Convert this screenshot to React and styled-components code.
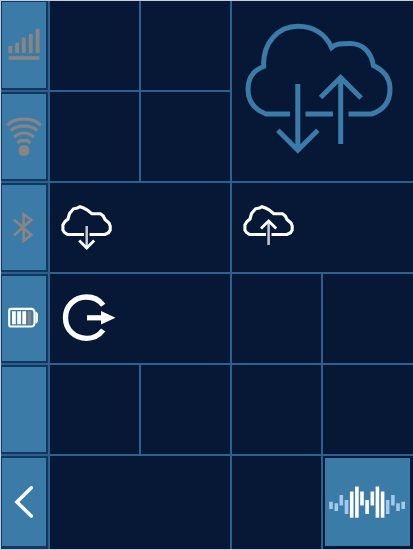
import React from 'react';
import styled, { createGlobalStyle } from 'styled-components';

const Global = createGlobalStyle`
  body { margin: 0; background: #c3cdd5; font-family: "Liberation Sans", Arial, sans-serif; }
`;

const Screen = styled.main`
  box-sizing: border-box;
  width: 413px;
  height: 550px;
  padding: 1px 0 1px 1px;
  background: #c3cdd5;
`;

const Board = styled.div`
  display: grid;
  grid-template-columns: 47px 89px 89px 89px 90px;
  grid-template-rows: repeat(5, 89px) 93px;
  gap: 2px;
  height: 548px;
  background: #2b618e;
`;

const Cell = styled.div`
  display: flex;
  align-items: flex-start;
  box-sizing: border-box;
  min-width: 0;
  min-height: 0;
  background: #071837;
  grid-column: ${(p) => p.$col} / span ${(p) => p.$w || 1};
  grid-row: ${(p) => p.$row} / span ${(p) => p.$h || 1};
`;

const SideCell = styled(Cell)`
  padding: ${(p) => (p.$row === 1 ? '1px 2px 2px 1px' : p.$row === 6 ? '2px 2px 3px 1px' : '2px 2px 2px 1px')};
  background: #11365f;
`;

const WaveCell = styled(Cell)`
  padding: 2px 3px 3px 2px;
`;

const Tile = styled.button`
  display: flex;
  align-items: flex-start;
  width: 100%;
  height: 100%;
  padding: 0;
  border: 0;
  background: #3a7ba8;
`;

const Icon = styled.svg`
  display: block;
  flex: none;
  margin: ${(p) => p.$top}px 0 0 ${(p) => p.$left}px;
  fill: none;
  stroke: ${(p) => p.$color || '#fff'};
`;

const Signal = () => (
  <Icon width="32" height="33" viewBox="8 28 32 33" $left={6} $top={26} $color="#8a8583">
    <path d="M10.3 46v7M17.1 42.7V53M23.7 37.5V53M30.8 34V53M37.6 29v24" strokeWidth="3.8" />
    <path d="M8.5 58h31" strokeWidth="3.6" />
  </Icon>
);

const Wifi = () => (
  <Icon width="36" height="41" viewBox="6 116 36 41" $left={4} $top={22} $color="#8a8583">
    <path d="M7.2 125.2L12.5 121.2L19 119.3H29L35.5 121.2L40.8 125.2M10.8 130.6L15 127.6L20 126.3H28L33 127.6L37.2 130.6M14 137L18 134.4L21 133.3H27L30 134.4L34 137M17.5 143L20.5 140.6H27.5L30.5 143" strokeWidth="3.1" />
    <circle cx="24" cy="150.5" r="5.6" fill="#8a8583" stroke="none" />
  </Icon>
);

const Bluetooth = () => (
  <Icon width="22" height="34" viewBox="12 211 22 34" $left={10} $top={26} $color="#8a8583">
    <path d="M14 219.5l17.3 15.5-7.7 5.8v-26.5l7.7 5.5L14 235.5" strokeWidth="2.6" />
  </Icon>
);

const Battery = () => (
  <Icon width="32" height="22" viewBox="7 307 32 22" $left={5} $top={31}>
    <path d="M11 308.9h20.5q2.3 0 3 3v11.6q-.7 3-3 3H11q-1.8 0-1.8-1.8v-14q0-1.8 1.8-1.8z" strokeWidth="2.1" />
    <path d="M35.5 311.8h.8q1.7 1 1.7 2.6v6.4q0 1.6-1.7 2.6h-.8z" fill="#fff" stroke="none" />
    <path d="M13.9 311.3v13M19.1 311.3v13M24.2 311.3v13" strokeWidth="3.8" />
    <path d="M29.4 311.3v13" stroke="#8a8583" strokeWidth="3.6" />
  </Icon>
);

const Back = () => (
  <Icon width="22" height="36" viewBox="13 484 22 36" $left={11} $top={26}>
    <path d="M31.3 487.8L16.9 502l14.4 14" strokeWidth="3.5" strokeLinecap="round" strokeLinejoin="miter" />
  </Icon>
);

const SyncCloud = () => (
  <Icon width="152" height="136" viewBox="243 20 152 136" $left={11} $top={19} $color="#3a7ba8">
    <path
      d="M290 114H266C254 109.5 248 101 248 89C248 77 254 70 263.7 66.5C262.5 43 278 26.2 298 26.2C314 26.2 326 34.5 331.5 47.5C336 43.7 341 43.5 350 43.5C363 43.5 371.5 52.5 373.3 65.5C384 70.5 390 78.5 390 89C390 101.5 384 110 371.5 114H348.5M333 114H305.5"
      strokeWidth="5"
    />
    <path d="M297.8 84v66M277.8 130.3l20 20 20-20M340.7 144V76M320.6 97.5l20-20 20.5 20.5" strokeWidth="5" />
  </Icon>
);

const smallCloud = 'M84 234.5H67.5L64.5 232.5L62.9 230V225L65 221.5L68 219L69.5 213.5L73.5 208.8L77.5 208L80 206.7L83.5 208L87 209.8L91.8 213.7H100.5L103.3 216L105 219.5L109 223L110.2 226V230L108.5 232.7L105 234.5H89.5';

const DownloadCloud = () => (
  <Icon width="52" height="48" viewBox="60 203 52 48" $left={10} $top={20}>
    <path d={smallCloud} strokeWidth="3.1" />
    <path d="M86.7 226v22" stroke="#c6cbd3" strokeWidth="2.5" />
    <path d="M79.2 240.5l7.5 7.5 7.5-7.5" strokeWidth="2.7" />
  </Icon>
);

const UploadCloud = () => (
  <Icon width="52" height="48" viewBox="242 203 52 48" $left={10} $top={20}>
    <path d={smallCloud} transform="translate(182)" strokeWidth="3.1" />
    <path d="M268.6 245v-23" stroke="#c6cbd3" strokeWidth="2.5" />
    <path d="M261 228.5l7.6-7.5 7.6 7.5" strokeWidth="2.7" />
  </Icon>
);

const Exit = () => (
  <Icon width="56" height="52" viewBox="61 292 56 52" $left={11} $top={18}>
    <path d="M103.2 305.2C99 299.5 93 297 86.5 297C74 297 65.5 306.5 65.5 317.7C65.5 329.5 74.5 338.4 86.5 338.4C93.5 338.4 99 335.5 103.2 330" strokeWidth="5.3" />
    <path d="M87 317.8h16" strokeWidth="5.2" />
    <path d="M101 311l14.5 6.8-14.5 6.8z" fill="#fff" stroke="none" />
  </Icon>
);

const bars = [
  [331, 501.7, 509], [336.3, 503.3, 511], [341.3, 495, 505.5], [346.5, 500, 514],
  [351.7, 491.5, 517.7], [356.9, 486.5, 517.7], [362, 491.5, 505.5], [367.1, 500, 514],
  [372.3, 491.5, 505.5], [377.4, 486.5, 517.7], [382.6, 491.5, 517.7], [387.7, 500, 514],
  [392.9, 495, 505.5], [398, 503.3, 511], [403.2, 501.7, 509],
];

const Waveform = () => (
  <Icon width="78" height="36" viewBox="328 484 78 36" $left={3} $top={26}>
    {bars.map(([x, top, bottom], i) => (
      <path key={x} d={`M${x} ${top}V${bottom}`} stroke={i > 3 && i < 11 ? '#fff' : '#a3c9eb'} strokeWidth="3.6" />
    ))}
  </Icon>
);

const sideItems = [
  ['Signal', Signal], ['Wi-Fi', Wifi], ['Bluetooth', Bluetooth],
  ['Battery', Battery], ['Blank', null], ['Back', Back],
];

const emptyCells = [
  [1, 2], [1, 3], [2, 2], [2, 3], [4, 4], [4, 5],
  [5, 2], [5, 3], [5, 4], [5, 5], [6, 2, 2], [6, 4],
];

export default function App() {
  return (
    <>
      <Global />
      <Screen>
        <Board>
          {sideItems.map(([label, Glyph], i) => (
            <SideCell key={label} $row={i + 1} $col={1}>
              <Tile aria-label={label}>{Glyph && <Glyph />}</Tile>
            </SideCell>
          ))}
          {emptyCells.map(([row, col, w]) => (
            <Cell key={`${row}-${col}`} $row={row} $col={col} $w={w} />
          ))}
          <Cell $row={1} $col={4} $w={2} $h={2}><SyncCloud /></Cell>
          <Cell $row={3} $col={2} $w={2}><DownloadCloud /></Cell>
          <Cell $row={3} $col={4} $w={2}><UploadCloud /></Cell>
          <Cell $row={4} $col={2} $w={2}><Exit /></Cell>
          <WaveCell $row={6} $col={5}>
            <Tile aria-label="Waveform"><Waveform /></Tile>
          </WaveCell>
        </Board>
      </Screen>
    </>
  );
}
